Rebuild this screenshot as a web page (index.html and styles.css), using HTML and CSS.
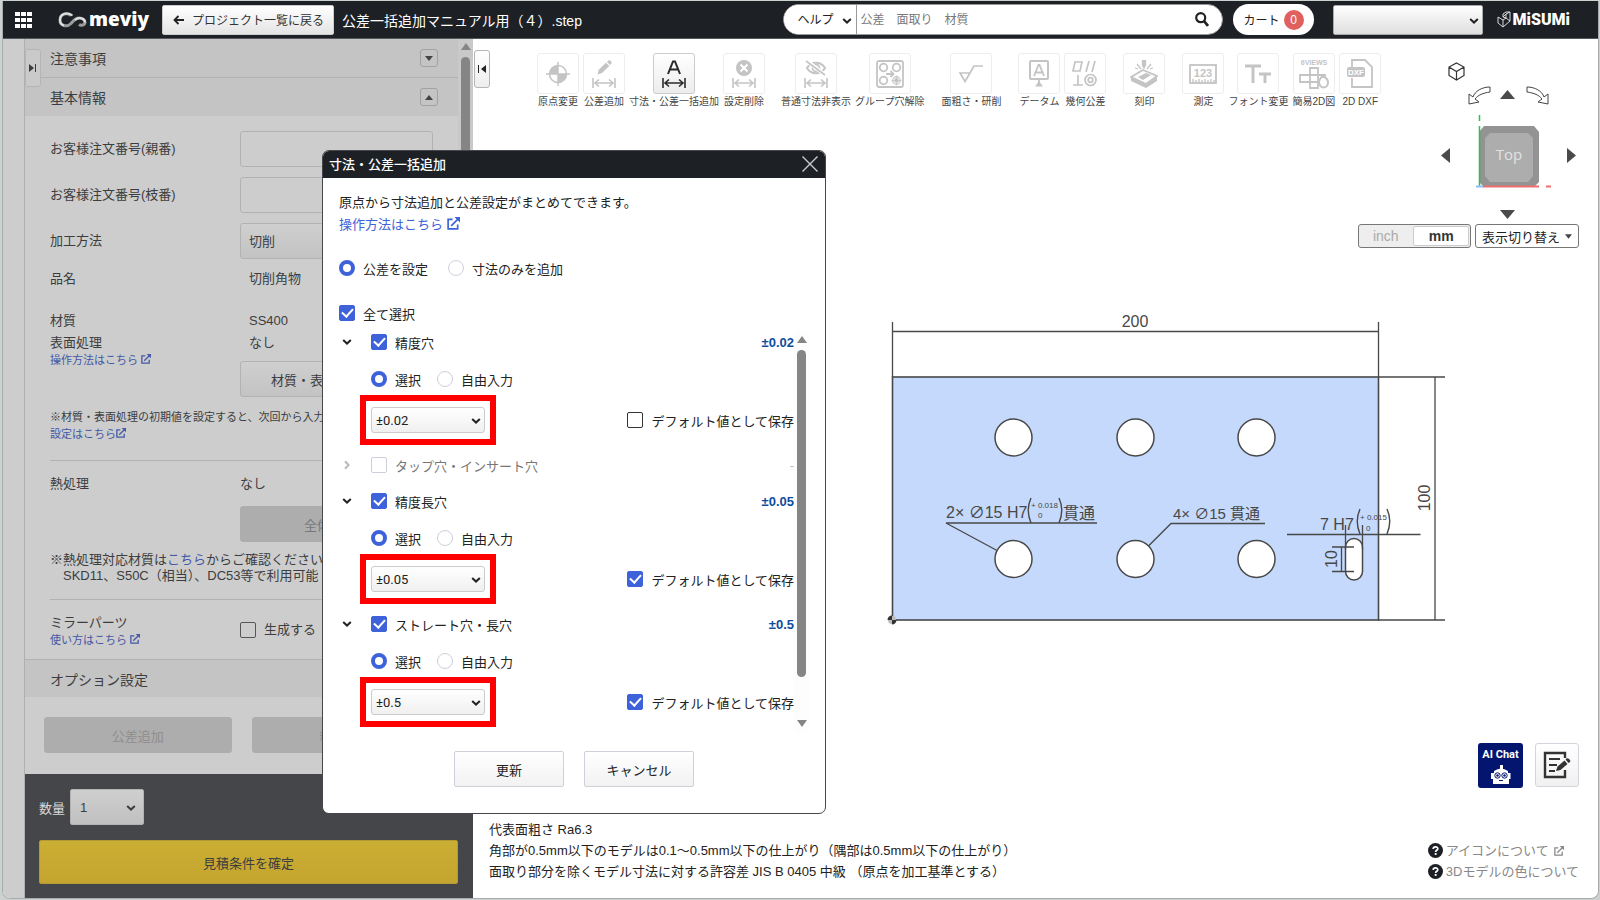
FILE: index.html
```html
<!DOCTYPE html>
<html lang="ja">
<head>
<meta charset="utf-8">
<title>meviy</title>
<link rel="stylesheet" href="styles.css">
</head>
<body>
<svg class="defs" aria-hidden="true">
  <symbol id="ext" viewBox="0 0 14 14"><path d="M6 2.5H1.2v10.3h10.3V8" fill="none" stroke="currentColor" stroke-width="1.8"/><path d="M4.5 9.5 12 2" fill="none" stroke="currentColor" stroke-width="1.8"/><path d="M8 0h6v6z" fill="currentColor"/></symbol>
  <symbol id="chev" viewBox="0 0 10 6"><path d="M1.2 1 5 4.6 8.8 1" fill="none" stroke="currentColor" stroke-width="2"/></symbol>
  <symbol id="dim" viewBox="0 0 24 10"><path d="M1 0v10M23 0v10M3 5h18M7 1.5 3 5l4 3.500M17 1.500 21 5l-4 3.500" fill="none" stroke="currentColor" stroke-width="1.6"/></symbol>
  <symbol id="help" viewBox="0 0 15 15"><circle cx="7.500" cy="7.500" r="7.500" fill="#1d2126"/><path d="M5.200 6C5.200 3.200 9.900 3.300 9.800 5.900 9.700 7.300 7.600 7.200 7.600 8.900" fill="none" stroke="#fff" stroke-width="1.700"/><rect x="6.700" y="10" width="1.900" height="1.900" fill="#fff"/></symbol>
</svg>
<div class="app">
  <header class="topbar">
    <button class="apps" aria-label="メニュー"><svg width="17" height="16" viewBox="0 0 17 16"><path d="M0 0h5v4H0zM6 0h5v4H6zM12 0h5v4h-5zM0 6h5v4H0zM6 6h5v4H6zM12 6h5v4h-5zM0 12h5v4H0zM6 12h5v4H6zM12 12h5v4h-5z" fill="#fff"/></svg></button>
    <a class="brand" href="#"><svg width="29" height="16" viewBox="0 0 29 16"><path d="M13 3.500C9 0 2 2 2 8s7 7.500 11 3.500C16 8.500 17 6 21 6c3.500 0 6 2 6 4.500S23 14 21 12.500" fill="none" stroke="#9b9b9b" stroke-width="3"/><path d="M14.500 3.500C10 0 2 1 2 8c0 3 2 5 4 5.500M17 8c5-4 10-1 10 2.500" fill="none" stroke="#e2e2e2" stroke-width="2"/></svg><span>meviy</span></a>
    <button class="back"><svg width="11" height="10" viewBox="0 0 11 10"><path d="M11 5H1.500M5.500 1l-4 4 4 4" fill="none" stroke="#222" stroke-width="1.800"/></svg>プロジェクト一覧に戻る</button>
    <span class="filename">公差一括追加マニュアル用（４）.step</span>
    <form class="search">
      <span class="pick help-pick"><select aria-label="検索対象"><option>ヘルプ</option></select><svg class="chev"><use href="#chev"/></svg></span>
      <input type="text" placeholder="公差　面取り　材質" aria-label="検索">
      <button type="button" aria-label="検索する"><svg width="14" height="15" viewBox="0 0 14 15"><circle cx="5.700" cy="5.700" r="4.500" fill="none" stroke="#222" stroke-width="2.200"/><path d="m9 9 4 5" stroke="#222" stroke-width="2.800"/></svg></button>
    </form>
    <button class="cart">カート<span class="count">0</span></button>
    <span class="pick account"><select aria-label="アカウント"><option></option></select><svg class="chev"><use href="#chev"/></svg></span>
    <a class="misumi" href="#"><svg width="14" height="18" viewBox="0 0 14 18"><path d="M1 6l5 3v7L1 12zM6 9l3-2V3l4-2v9l-7 6M6 6l3 1 4 3M6 6V3l3-2 4 0M9 3 6 6" fill="none" stroke="#d8d8d8" stroke-width="1"/></svg><span>MiSUMi</span></a>
  </header>
  <div class="main">
    <div class="rail"></div>
    <aside class="panel">
      <button class="tab tab-left" aria-label="パネルを開く"><svg width="8" height="8" viewBox="0 0 8 8"><path d="M0 0l5 4-5 4zM6 0h1v8H6z" fill="#3c3d40"/></svg></button>
      <div class="scroll">
        <div class="content">
          <div class="sec"><span>注意事項</span><button aria-label="開く"><svg width="8" height="5" viewBox="0 0 8 5"><path d="M0 0h8L4 5z" fill="#444"/></svg></button></div>
          <div class="sec sec-open"><span>基本情報</span><button aria-label="閉じる"><svg width="8" height="5" viewBox="0 0 8 5"><path d="M0 5h8L4 0z" fill="#444"/></svg></button></div>
          <div class="fields">
            <div class="row tall"><label for="po">お客様注文番号(親番)</label><input id="po" type="text"></div>
            <div class="row tall"><label for="br">お客様注文番号(枝番)</label><input id="br" type="text"></div>
            <div class="row tall"><label for="mt">加工方法</label><select id="mt"><option>切削</option></select></div>
            <div class="row"><span>品名</span><span class="val">切削角物</span></div>
            <div class="material">
              <div class="row"><span>材質</span><span class="val">SS400</span></div>
              <div class="row top">
                <div class="stack"><span>表面処理</span><a class="small" href="#">操作方法はこちら <svg class="ext s10"><use href="#ext"/></svg></a></div>
                <div class="stack gap8"><span class="val">なし</span><button class="btn start">材質・表面</button></div>
              </div>
            </div>
            <p class="note small">※材質・表面処理の初期値を設定すると、次回から入力<br><a href="#">設定はこちら<svg class="ext s10"><use href="#ext"/></svg></a></p>
          </div>
          <div class="fields ruled heat">
            <div class="row top"><span>熱処理</span><div class="stack gap12"><span>なし</span><button class="btn off" disabled>全体熱処理</button></div></div>
            <p class="note">※熱処理対応材質は<a href="#">こちら</a>からご確認ください<br><span class="indent">SKD11、S50C（相当）、DC53等で利用可能</span></p>
          </div>
          <div class="fields ruled mirror">
            <div class="row"><div class="stack"><span>ミラーパーツ</span><a class="small" href="#">使い方はこちら <svg class="ext s10"><use href="#ext"/></svg></a></div><label class="opt"><input type="checkbox" class="dark">生成する</label></div>
          </div>
          <div class="sec option"><span>オプション設定</span></div>
          <div class="pair"><button class="btn off faint" disabled>公差追加</button><button class="btn off faint" disabled>粗さ追加</button></div>
        </div>
        <div class="bar"><i class="up"></i><i class="thumb"></i></div>
      </div>
      <div class="foot">
        <div class="qty"><label for="qty">数量</label><span class="pick"><select id="qty"><option>1</option></select><svg class="chev"><use href="#chev"/></svg></span></div>
        <button class="confirm">見積条件を確定</button>
      </div>
    </aside>
    <section class="viewer">
      <button class="tab tab-right" aria-label="パネルを閉じる"><svg width="8" height="8" viewBox="0 0 8 8"><path d="M8 0 3 4l5 4zM0 0h1v8H0z" fill="#222"/></svg></button>
      <div class="upper">
        <div class="toolbar">
          <div class="tools">
            <button class="tool"><span><svg width="24" height="24" viewBox="0 0 24 24"><circle cx="12" cy="12" r="8.500" fill="none" stroke="currentColor" stroke-width="1.500"/><path d="M12 12V3.500A8.500 8.500 0 0 0 3.500 12zM12 12v8.500a8.500 8.500 0 0 0 8.500-8.500z" fill="currentColor"/><path d="M12 0v24M0 12h24" stroke="currentColor" stroke-width="1.500"/></svg></span>原点変更</button>
            <button class="tool"><span><svg width="24" height="28" viewBox="0 0 24 28"><path d="m5.500 14.500 1.200-4.800 7.300-7 3.300 3.400-7.300 7zM15 2l1.500-1.500c1.200-1 4 1.500 3 3L18 5z" fill="currentColor"/><use href="#dim" y="18" width="24" height="10"/></svg></span>公差追加</button>
            <button class="tool on"><span><svg width="24" height="28" viewBox="0 0 24 28"><path d="M6 14 11 1.500h2L18 14M8 9.500h8" fill="none" stroke="currentColor" stroke-width="2"/><use href="#dim" y="18" width="24" height="10"/></svg></span>寸法・公差一括追加</button>
            <button class="tool"><span><svg width="24" height="28" viewBox="0 0 24 28"><circle cx="12" cy="8" r="8" fill="currentColor"/><path d="m8.500 4.500 7 7m0-7-7 7" stroke="#fff" stroke-width="2"/><use href="#dim" y="18" width="24" height="10"/></svg></span>設定削除</button>
          </div>
          <div class="tools">
            <button class="tool"><span><svg width="24" height="28" viewBox="0 0 24 28"><path d="M3 8c4-7 14-7 18 0-4 7-14 7-18 0z" fill="none" stroke="currentColor" stroke-width="2"/><circle cx="12" cy="8" r="3.500" fill="none" stroke="currentColor" stroke-width="1.800"/><path d="M3 1l18 14" stroke="#fff" stroke-width="4"/><path d="M2 1l19 14" stroke="currentColor" stroke-width="1.600"/><use href="#dim" y="18" width="24" height="10"/></svg></span>普通寸法非表示</button>
            <button class="tool"><span><svg width="28" height="28" viewBox="0 0 28 28" fill="none" stroke="currentColor" stroke-width="1.800"><rect x="1" y="1" width="26" height="26" rx="2"/><circle cx="7.500" cy="7.500" r="3.800"/><circle cx="20.500" cy="7.500" r="3.800"/><circle cx="7.500" cy="20.500" r="3.800"/><circle cx="20.500" cy="20.500" r="3.800" stroke-width="1.200"/><circle cx="20.500" cy="20.500" r="1.500" fill="currentColor"/><path d="M10 14h7M14.500 11l3 3-3 3"/><path d="M20.500 15.500v10M15.500 20.500h10" stroke-width=".8"/></svg></span>グループ穴解除</button>
          </div>
          <div class="tools">
            <button class="tool"><span><svg width="24" height="20" viewBox="0 0 24 20"><path d="M1 9h10L6 17.500zM6 17.500 15 2h9" fill="none" stroke="currentColor" stroke-width="1.700"/></svg></span>面粗さ・研削</button>
          </div>
          <div class="tools">
            <button class="tool"><span><svg width="20" height="27" viewBox="0 0 20 27"><rect x="1" y="1" width="18" height="18" rx="1" fill="none" stroke="currentColor" stroke-width="2"/><path d="M5 16 9.500 5h1L15 16M6.500 12.500h7M10 19v4" fill="none" stroke="currentColor" stroke-width="1.800"/><path d="M6 26.500 10 21l4 5.500z" fill="currentColor"/></svg></span>データム</button>
            <button class="tool"><span><svg width="26" height="27" viewBox="0 0 26 27" fill="none" stroke="currentColor" stroke-width="1.700"><path d="M1 11 3 2h7L8 11zM14 12l3-11M20 12l3-11M1 25h10M6 25V15"/><circle cx="18.500" cy="20" r="5.500"/><circle cx="18.500" cy="20" r="2.300"/></svg></span>幾何公差</button>
          </div>
          <div class="tools">
            <button class="tool"><span><svg width="28" height="28" viewBox="0 0 28 28"><path d="M1 17l12-7 14 6-11 8z" fill="none" stroke="currentColor" stroke-width="1.800"/><path d="M1 17v4l15 7v-4zM16 24v4l11-7v-4zM8 17l8-4 5 2-8 5z" fill="currentColor"/><path d="M12.500 0h3v5L14 8l-1.500-3zM7 4l4 5M21 4l-4 5M5 8l3 1M23 8l-3 1" fill="currentColor" stroke="currentColor" stroke-width="1.300"/></svg></span>刻印</button>
          </div>
          <div class="tools">
            <button class="tool"><span><svg width="28" height="20" viewBox="0 0 28 20"><rect x="1" y="1" width="26" height="18" fill="none" stroke="currentColor" stroke-width="1.800"/><path d="M4 19v-4M7 19v-3M10 19v-4M13 19v-3M16 19v-4M19 19v-3M22 19v-4M25 19v-3" stroke="currentColor" stroke-width="1.400"/><text x="14" y="13" font-size="11" font-weight="700" text-anchor="middle" fill="currentColor">123</text></svg></span>測定</button>
            <button class="tool"><span><svg width="26" height="20" viewBox="0 0 26 20"><path d="M0 2h16M8 2v17M14 10h12M20 10v9" fill="none" stroke="currentColor" stroke-width="3"/></svg></span>フォント変更</button>
            <button class="tool"><span><svg width="30" height="31" viewBox="0 0 30 31"><text x="15" y="7" font-size="7" font-weight="700" text-anchor="middle" fill="currentColor">6VIEWS</text><path d="M11 10h8v7h7v7h-7v6h-8v-6H1v-7h10zM11 17h8v7h-8z" fill="none" stroke="currentColor" stroke-width="1.800"/><path d="M20 24c0-2 2-5 4-5.500 3 1 5 3 5 6s-2 5-4.500 5S20 27 20 24z" fill="#fff" stroke="currentColor" stroke-width="2"/></svg></span>簡易2D図</button>
            <button class="tool"><span><svg width="27" height="30" viewBox="0 0 27 30"><path d="M5 8V1h13l7 7v20H5v-9" fill="none" stroke="currentColor" stroke-width="1.800"/><rect x="0" y="8" width="18" height="10" rx="2" fill="currentColor"/><text x="9" y="16" font-size="8" font-weight="700" text-anchor="middle" fill="#fff">DXF</text></svg></span>2D DXF</button>
          </div>
        </div>
        <div class="nav">
          <button class="home" aria-label="等角表示"><svg width="17" height="19" viewBox="0 0 17 19"><path d="M8.500 1 16 5v8.500L8.500 18 1 13.500V5zM1 5l7.500 4.500L16 5M8.500 9.500V18" fill="none" stroke="#333" stroke-width="1.200"/></svg></button>
          <button class="ccw" aria-label="左回転"><svg width="23" height="19" viewBox="0 0 23 19"><path d="M22 1C14 1 7 5 5 11L1 8v10l10-2-4-3C10 9 15 7 22 6z" fill="#fff" stroke="#444"/></svg></button>
          <button class="cw" aria-label="右回転"><svg width="23" height="19" viewBox="0 0 23 19"><path d="M1 1C9 1 16 5 18 11L22 8v10l-10-2 4-3C13 9 8 7 1 6z" fill="#fff" stroke="#444"/></svg></button>
          <button class="n-up" aria-label="上"><svg width="15" height="9" viewBox="0 0 15 9"><path d="M0 9h15L7.500 0z" fill="#4a4a4a"/></svg></button>
          <button class="n-left" aria-label="左"><svg width="9" height="15" viewBox="0 0 9 15"><path d="M9 0v15L0 7.500z" fill="#4a4a4a"/></svg></button>
          <button class="n-right" aria-label="右"><svg width="9" height="15" viewBox="0 0 9 15"><path d="M0 0v15l9-7.500z" fill="#4a4a4a"/></svg></button>
          <button class="n-down" aria-label="下"><svg width="15" height="9" viewBox="0 0 15 9"><path d="M0 0h15L7.500 9z" fill="#4a4a4a"/></svg></button>
          <svg class="cube" width="76" height="76" viewBox="0 0 76 76"><path d="M9 12h50l5 6v50l-5 5H9l-5-5V18z" fill="#939393"/><path d="M15 19h38l5 5v38l-5 6H15l-5-6V24z" fill="#adadad"/><path d="M4.500 1v6M4.500 12v60" stroke="#2bc04b" stroke-width="1.500"/><path d="M8 72.500h56M71 72.500h5" stroke="#ee6e6e" stroke-width="2"/><path d="M1 72.500h7" stroke="#8fbcf5" stroke-width="2"/><text x="34" y="46" font-size="15" text-anchor="middle" fill="#e2e2e2" class="cube-text">Top</text></svg>
        </div>
      </div>
      <div class="controls">
        <div class="units"><button>inch</button><button class="sel">mm</button></div>
        <button class="switch">表示切り替え<svg width="7" height="5" viewBox="0 0 8 5"><path d="M0 0h8L4 5z" fill="#444"/></svg></button>
      </div>
      <div class="stage">
        <svg class="plan" width="570" height="330" viewBox="880 305 570 330">
          <g fill="none" stroke="#484848" stroke-width="1.300">
            <rect x="892.500" y="377" width="486" height="243" fill="#c4d9fb" stroke-width="1.600"/>
            <path d="M892.500 322v55M1378.500 322v55M892.500 331.500h486M1378 377h67M1378 620h67M1435 377v243"/>
            <g fill="#fff" stroke-width="1.500"><circle cx="1013.500" cy="437.500" r="18.500"/><circle cx="1135.500" cy="437.500" r="18.500"/><circle cx="1256.500" cy="437.500" r="18.500"/><circle cx="1013.500" cy="559" r="18.500"/><circle cx="1135.500" cy="559" r="18.500"/><circle cx="1256.500" cy="559" r="18.500"/><rect x="1345.500" y="538.500" width="17" height="41.500" rx="8.500"/></g>
            <path d="M1097 523H946l51 27.500M1265 523.500h-94L1148.500 546M1287 534.500h133.500M1345.500 525v24M1362.500 525v24M1332 547h22M1332 571.500h22M1341.500 547v24.500"/>
            <path d="M1031 498q-5.500 12 0 25M1059 498q5.500 12 0 25M1360 509q-5.500 12 0 25M1387 509q5.500 12 0 25" stroke-width="1.400"/>
          </g>
          <g fill="#484848" class="plan-text">
            <text x="1135" y="327" text-anchor="middle">200</text>
            <text transform="translate(1430 498) rotate(-90)" text-anchor="middle">100</text>
            <text transform="translate(1337 559) rotate(-90)" text-anchor="middle">10</text>
            <text x="946" y="518">2× ∅15 H7</text><text x="1063" y="519">貫通</text>
            <text x="1173" y="519" class="t15">4× ∅15 貫通</text>
            <text x="1320" y="530">7 H7</text>
            <g class="t8"><text x="1031" y="508">+ 0.018</text><text x="1038" y="518">0</text><text x="1360" y="520">+ 0.015</text><text x="1366" y="531">0</text></g>
          </g>
          <circle cx="892" cy="620" r="4" fill="#bbb"/><path d="M892 620v-4.500a4.500 4.500 0 0 0-4.500 4.500zM892 620v4.500a4.500 4.500 0 0 0 4.500-4.500z" fill="#333"/>
        </svg>
      </div>
      <div class="float">
        <button class="chat"><span>AI Chat</span><svg width="22" height="19" viewBox="0 0 22 19"><path d="M10 0h3v4h-3zM4 6q7-5 14 0v2h2.500v6H19v5H3v-5H1V8h3z" fill="#fff"/><circle cx="7.500" cy="10.500" r="2.700" fill="#fff" stroke="#03156f" stroke-width="1"/><circle cx="14.500" cy="10.500" r="2.700" fill="#fff" stroke="#03156f" stroke-width="1"/><circle cx="7.500" cy="10.500" r="1.200" fill="#03156f"/><circle cx="14.500" cy="10.500" r="1.200" fill="#03156f"/><path d="M9 15.500h4" stroke="#03156f"/></svg></button>
        <button class="memo" aria-label="メモ"><svg width="28" height="28" viewBox="0 0 28 28"><path d="M22 7V2H2v24h20v-7" fill="none" stroke="#333" stroke-width="2.400"/><path d="M6 8h11M6 14h8M6 20h6" stroke="#333" stroke-width="2.200"/><path d="m13 20 1.500-4.500 7-6 3 3.500-7 6zM22.500 8.500l1-1c1.500-1.500 5 2 3.500 3.500l-1.500 1z" fill="#333"/></svg></button>
      </div>
      <div class="info">
        <p>代表面粗さ Ra6.3<br>角部が0.5mm以下のモデルは0.1～0.5mm以下の仕上がり（隅部は0.5mm以下の仕上がり）<br>面取り部分を除くモデル寸法に対する許容差 JIS B 0405 中級 （原点を加工基準とする）</p>
        <div class="helps"><a href="#"><svg width="15" height="15"><use href="#help"/></svg>アイコンについて<svg class="ext s10 wide"><use href="#ext"/></svg></a><a href="#"><svg width="15" height="15"><use href="#help"/></svg>3Dモデルの色について</a></div>
      </div>
    </section>
  </div>
  <div class="dialog" role="dialog" aria-labelledby="dt">
    <div class="title"><h2 id="dt">寸法・公差一括追加</h2><button aria-label="閉じる"><svg width="16" height="16" viewBox="0 0 16 16"><path d="m.5.5 15 15m0-15-15 15" stroke="#ccc" stroke-width="1.400"/></svg></button></div>
    <div class="body">
      <p>原点から寸法追加と公差設定がまとめてできます。<br><a href="#">操作方法はこちら <svg class="ext s13"><use href="#ext"/></svg></a></p>
      <div class="radios mode"><label class="opt"><input type="radio" name="mode" checked>公差を設定</label><label class="opt"><input type="radio" name="mode">寸法のみを追加</label></div>
      <label class="opt all"><input type="checkbox" checked>全て選択</label>
      <div class="list">
        <div class="groups">
          <div class="group">
            <div class="head"><svg class="chev"><use href="#chev"/></svg><label class="opt"><input type="checkbox" checked>精度穴</label><b>±0.02</b></div>
            <div class="radios"><label class="opt"><input type="radio" name="a" checked>選択</label><label class="opt"><input type="radio" name="a">自由入力</label></div>
            <div class="choice"><span class="mark"><span class="pick"><select aria-label="精度穴の公差"><option>±0.02</option></select><svg class="chev"><use href="#chev"/></svg></span></span><label class="opt"><input type="checkbox" class="dark">デフォルト値として保存</label></div>
          </div>
          <div class="group closed">
            <div class="head"><svg class="chev side"><use href="#chev"/></svg><label class="opt"><input type="checkbox" disabled>タップ穴・インサート穴</label><span class="none">-</span></div>
          </div>
          <div class="group">
            <div class="head"><svg class="chev"><use href="#chev"/></svg><label class="opt"><input type="checkbox" checked>精度長穴</label><b>±0.05</b></div>
            <div class="radios"><label class="opt"><input type="radio" name="b" checked>選択</label><label class="opt"><input type="radio" name="b">自由入力</label></div>
            <div class="choice"><span class="mark"><span class="pick"><select aria-label="精度長穴の公差"><option>±0.05</option></select><svg class="chev"><use href="#chev"/></svg></span></span><label class="opt"><input type="checkbox" checked>デフォルト値として保存</label></div>
          </div>
          <div class="group">
            <div class="head"><svg class="chev"><use href="#chev"/></svg><label class="opt"><input type="checkbox" checked>ストレート穴・長穴</label><b>±0.5</b></div>
            <div class="radios"><label class="opt"><input type="radio" name="c" checked>選択</label><label class="opt"><input type="radio" name="c">自由入力</label></div>
            <div class="choice"><span class="mark"><span class="pick"><select aria-label="ストレート穴の公差"><option>±0.5</option></select><svg class="chev"><use href="#chev"/></svg></span></span><label class="opt"><input type="checkbox" checked>デフォルト値として保存</label></div>
          </div>
        </div>
        <div class="bar light"><i class="up"></i><i class="thumb"></i><i class="down"></i></div>
      </div>
      <div class="actions"><button>更新</button><button>キャンセル</button></div>
    </div>
  </div>
</div>
</body>
</html>
```

FILE: styles.css
```css
*{box-sizing:border-box}
body{margin:0;height:100vh;padding:1px 1px 1px 2px;background:#cbd2cf;overflow:hidden}
body,button,input,select{font-family:"Liberation Sans","Noto Sans CJK JP",sans-serif;font-size:13px;color:#222}
button,select{cursor:pointer}
button{padding:0;border:0;background:none}
h2,p{margin:0}
a{color:#3e62d9;text-decoration:none}
select{appearance:none}
svg{flex:none}
.defs{position:absolute;width:0;height:0}
.app{position:relative;height:100%;display:flex;flex-direction:column;background:#fff;border:1px solid #a9acae;border-top:0;border-radius:0 0 8px 8px;overflow:hidden}
.ext{display:inline-block}
.s10{width:10px;height:10px}
.s13{width:13px;height:13px}
.chev{width:10px;height:6px}
.pick{position:relative;display:inline-flex}
.pick .chev{position:absolute;right:4px;top:calc(50% - 2px);pointer-events:none}

.topbar{flex:none;display:flex;align-items:center;height:38px;padding:0 28px 0 12px;background:#1d2126;border-bottom:1px solid #55595d;white-space:nowrap}
.apps{display:flex}
.brand{display:flex;align-items:center;gap:2px;margin-left:26px;width:104px;color:#fff}
.brand span{font:800 19px/28px "Open Sans",sans-serif;padding-bottom:2px}
.back{display:flex;align-items:center;gap:8px;height:30px;padding:0 9px 0 10px;background:linear-gradient(#fff,#e4e4e4);border:1px solid #ccc;border-radius:2px;font-size:12px;color:#333}
.filename{margin-left:8px;font-size:14px;color:#fff}
.search{display:flex;align-items:center;margin-left:auto;width:440px;height:31px;background:#fff;border:1px solid #999;border-radius:16px;overflow:hidden}
.help-pick{height:100%;border-right:1px solid #999}
.help-pick select{width:72px;padding-left:13px;border:0;background:#fff;font-size:12px}
.search input{flex:1;min-width:0;border:0;padding:0 3px;font-size:12px;outline:0}
.search input::placeholder{color:#777;opacity:1}
.search button{display:flex;margin-right:13px}
.cart{display:flex;align-items:center;gap:4px;height:31px;margin-left:10px;padding:0 10px;background:#fff;border-radius:16px;font-size:12px}
.count{width:20px;height:20px;border-radius:50%;background:#e05f5f;color:#fff;line-height:20px}
.account{margin-left:19px}
.account select{width:150px;height:30px;border:1px solid #aaa;border-radius:2px;background:linear-gradient(#fff,#dedede)}
.misumi{display:flex;align-items:center;gap:2px;margin-left:14px;color:#fff}
.misumi span{font:900 16px/20px Roboto,sans-serif}

.main{flex:1;min-height:0;display:flex}
.rail{width:21px;background:#cdcdcd}
.panel{position:relative;width:449px;flex:none;display:flex;flex-direction:column;background:#cdcdcd;border-left:1px solid #b0b0b0;color:#3c3d40}
.panel button,.panel input,.panel select{color:#3c3d40}
.panel a{color:#4458a6}
.tab{position:absolute;z-index:1;width:16px;height:38px;display:flex;align-items:center;justify-content:center;border:1px solid #b5b5b5;border-radius:3px}
.tab-left{left:0;top:10px;background:#cacaca}
.tab-right{left:1px;top:11px;background:linear-gradient(#fff,#eee)}
.scroll{flex:1;min-height:0;display:flex;overflow:hidden}
.content{flex:1;min-width:0;white-space:nowrap}
.sec{display:flex;align-items:center;justify-content:space-between;height:39px;padding:0 20px 0 25px;background:#c4c4c4;border-bottom:1px solid #b2b2b2;font-size:14px}
.sec-open{height:38px;border:0}
.sec button{display:flex;align-items:center;justify-content:center;width:18px;height:18px;border:1px solid #a2a2a2;border-radius:3px}
.option{height:38px;border:0;border-top:1px solid #b2b2b2}
.fields{display:flex;flex-direction:column;gap:10px;padding:15px 0 17px;margin:0 25px;line-height:20px}
.row{display:grid;grid-template-columns:190px 1fr;align-items:center}
.row.top{align-items:start}
.row input[type=text],.row>select{height:36px;width:100%;border:1px solid #b2b2b2;border-radius:3px;background:#cdcdcd;padding:0 8px}
.row>select{background:linear-gradient(#cfcfcf,#c3c3c3)}
.val{padding-left:9px}
.material{margin-top:12px;display:flex;flex-direction:column;gap:2px}
.stack{display:flex;flex-direction:column}
.gap8{gap:8px}
.gap12{gap:12px}
.small{font-size:11px;line-height:14px}
.btn{height:36px;border:1px solid #b2b2b2;border-radius:3px;background:linear-gradient(#cfcfcf,#c3c3c3)}
.start{padding-left:30px;text-align:left}
.panel .btn.off{background:#adadad;border-color:#adadad;color:#77787a}
.panel .btn.faint{color:#8e8e8e}
.note{line-height:16px}
.note.small{margin-top:2px;line-height:17px}
.ruled{border-top:1px solid #b2b2b2}
.heat{padding:13px 0 15px}
.mirror{padding:13px 0 12px}
.indent{padding-left:13px}
.pair{display:flex;gap:20px;padding:20px 19px}
.pair .btn{flex:1}
.bar{width:15px;flex:none;display:flex;flex-direction:column;align-items:center;background:#c9c9c9;padding-top:4px}
.bar i{flex:none}
.up,.down{width:0;height:0;border:5px solid transparent}
.up{border-bottom:7px solid #858585;border-top:0}
.down{border-top:7px solid #858585;border-bottom:0}
.thumb{width:9px;height:440px;margin-top:7px;border-radius:5px;background:#858585}
.foot{flex:none;padding:15px 15px 14px 14px;background:#45464a}
.qty{display:flex;align-items:center;gap:5px;color:#d8d8d8}
.qty select{width:74px;height:36px;padding-left:9px;border:1px solid #b2b2b2;border-radius:2px;background:linear-gradient(#cfcfcf,#c0c0c0)}
.qty .chev{right:8px;color:#3c3d40}
.confirm{width:100%;height:44px;margin-top:15px;border:1px solid #b39a33;border-radius:2px;background:linear-gradient(#cbae34,#c4a52f)}

.opt{display:flex;align-items:center;gap:8px;white-space:nowrap}
.opt input{appearance:none;flex:none;width:16px;height:16px;margin:0;border:1px solid #cfcfdc;background:#fff;display:grid;place-content:center}
input[type=checkbox]{border-radius:2px}
input[type=radio]{border-radius:50%}
input[type=checkbox].dark{border-color:#333}
.panel input.dark{background:transparent;border-color:#55565a}
input[type=checkbox]:checked{background:#3e62d9;border-color:#3e62d9}
input[type=checkbox]:checked::after{content:"";width:5px;height:9px;margin-bottom:3px;border:solid #fff;border-width:0 2px 2px 0;transform:rotate(42deg)}
input[type=radio]:checked{border:4px solid #3e62d9}

.viewer{position:relative;flex:1;min-width:0;display:flex;flex-direction:column}
.upper{display:flex;justify-content:space-between;padding:14px 20px 0 64px}
.toolbar{display:flex;gap:17px}
.toolbar .tools:nth-child(1){margin-right:-1px}
.tools{display:flex;align-items:flex-start;gap:4px}
.tool{display:flex;flex-direction:column;align-items:center;min-width:42px;font-size:10px;line-height:16px;color:#444;white-space:nowrap}
.tool span{display:flex;align-items:center;justify-content:center;width:42px;height:41px;border:1px solid #ededed;border-radius:3px;color:#c4c4c4}
.tool.on span{color:#2b2b2b;border-color:#ccc;background:linear-gradient(#fff,#ececec)}
.nav{position:relative;width:138px;height:166px}
.nav button{position:absolute;display:flex}
.home{left:8px;top:9px}
.ccw{left:28px;top:33px}
.cw{right:29px;top:33px}
.n-up{left:60px;top:37px}
.n-left{left:1px;top:95px}
.n-right{right:2px;top:95px}
.n-down{left:60px;top:157px}
.cube{position:absolute;left:35px;top:61px}
.cube-text{font-family:"Open Sans",sans-serif}
.controls{display:flex;justify-content:flex-end;gap:4px;padding:5px 19px 0 0}
.units{display:flex;width:113px;height:24px;border:1px solid #777;border-radius:3px;background:#eee}
.units button{flex:1;color:#aaa;font-size:14px}
.units .sel{margin:1px;border:1px solid #ccc;border-radius:2px;background:#fff;color:#333;font-weight:700}
.switch{display:flex;align-items:center;gap:5px;height:24px;padding:0 6px;border:1px solid #777;border-radius:3px}
.stage{flex:1;display:flex;justify-content:flex-end;align-items:flex-start;padding:57px 148px 0 0}
.plan-text{font-size:16px}
.t15{font-size:15px}
.t8{font-size:8px}
.float{display:flex;justify-content:flex-end;gap:12px;padding-right:19px}
.chat{width:45px;height:45px;display:flex;flex-direction:column;align-items:center;justify-content:space-between;padding:4px 0;border-radius:3px;background:#03156f}
.chat span{font:700 11px/16px Roboto,sans-serif;color:#fff;white-space:nowrap}
.memo{width:44px;height:44px;display:flex;align-items:center;justify-content:center;border:1px solid #d4d4dc;border-radius:3px;background:linear-gradient(#fff,#f0f0f0)}
.info{display:flex;justify-content:space-between;align-items:flex-end;padding:31px 19px 16px 16px;line-height:21px;white-space:nowrap}
.helps a{display:flex;align-items:center;gap:3px;color:#888}
.wide{margin-left:2px}

.dialog{position:absolute;z-index:2;left:319px;top:149px;width:504px;border:1px solid #45474b;border-radius:7px;background:#fff;overflow:hidden}
.title{display:flex;align-items:center;justify-content:space-between;height:27px;padding:0 7px 2px 6px;background:#1d2126}
.title h2{font-size:13px;font-weight:500;color:#fff}
.title button{display:flex}
.body{padding:14px 16px 26px 16px}
.body p{line-height:22px}
.body .ext{vertical-align:-1px}
.radios{display:flex;gap:16px;height:20px}
.mode{gap:20px;margin-top:22px}
.all{height:20px;margin-top:25px}
.list{display:flex;height:400px;margin-top:9px}
.groups{flex:1;display:flex;flex-direction:column;gap:10px}
.head{display:flex;align-items:center;height:20px;padding-left:3px}
.head .opt{margin-left:19px;margin-right:auto}
.side{transform:rotate(-90deg);color:#bbb}
.head b{color:#0e4c9f}
.none{color:#bbb}
.closed{color:#777;margin-bottom:6px}
.group .radios{margin:17px 0 6px 32px}
.choice{display:flex;align-items:center;justify-content:space-between;margin-left:21px}
.mark{display:flex;padding:6px 5px;border:6px solid #f00}
.mark select{width:114px;height:26px;padding-left:4px;border:1px solid #ccc;border-radius:3px;background:linear-gradient(#fff,#f0f0f0);font-family:Roboto,sans-serif}
.light{background:#fdfdfd;justify-content:flex-start}
.light .thumb{height:327px;margin-top:7px}
.light .down{margin-top:auto;margin-bottom:5px}
.actions{display:flex;justify-content:center;gap:20px;margin-top:19px}
.actions button{width:110px;height:36px;border:1px solid #d0d0da;border-radius:2px;background:linear-gradient(#fff,#f2f2f2)}
```
